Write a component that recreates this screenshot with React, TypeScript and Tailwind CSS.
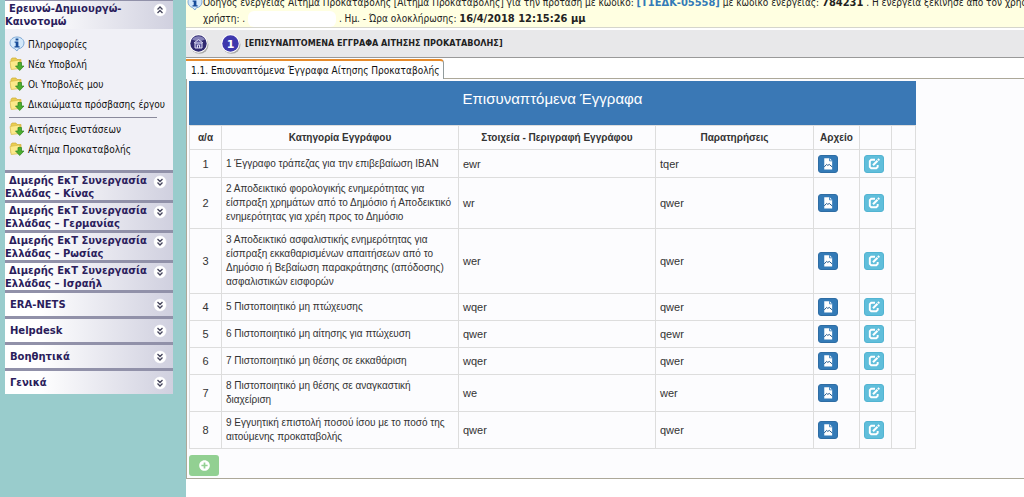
import type { ReactNode } from "react";
import { FaPlusCircle } from "react-icons/fa";

const tahoma = "font-['DejaVu_Sans_Condensed','DejaVu_Sans',sans-serif]";

function InfoIcon() {
  return (
    <svg viewBox="0 0 16 16" className="size-4 shrink-0" aria-hidden="true">
      <path d="M8 1C4 1 1 3.600 1 7c0 2.600 1.700 4.600 4.300 5.500L8 15l1.300-2.200C12.400 12.600 15 10.200 15 7c0-3.400-3-6-7-6z" fill="#d3e8fa" stroke="#7fa9d6" />
      <path d="M6.600 2.500h2.800v2H6.600zM5.600 5.500h3.800v4.800h1.200v1.300H5.500v-1.300h1.200V6.800H5.600z" fill="#174c99" />
    </svg>
  );
}

function FolderIcon() {
  return (
    <svg viewBox="0 0 16 16" className="size-4 shrink-0" aria-hidden="true">
      <path d="M2 3.500 3 2h4l1 1.500h4V12H2z" fill="#e9cd52" stroke="#cfae3b" strokeWidth=".7" />
      <path d="M1 5.500 10.500 4 11 12.500 2.200 13.500z" fill="#fbe98a" stroke="#d8bb4c" strokeWidth=".7" />
      <path d="M9 6.500h3.500V10H15l-4.300 4.500L6.500 10H9z" fill="#4cad2f" stroke="#2f8420" strokeWidth=".7" />
    </svg>
  );
}

function Chevrons({ up = false }: { up?: boolean }) {
  return (
    <svg viewBox="0 0 14 14" className="size-[14px] shrink-0" aria-hidden="true">
      <circle cx="7" cy="7" r="6.500" fill="#fff" stroke="#d3d3e2" strokeWidth=".6" />
      <path
        d={up ? "M4.500 6.500 7 4l2.500 2.500M4.500 10 7 7.500 9.500 10" : "M4.500 4 7 6.500 9.500 4M4.500 7.500 7 10l2.500-2.500"}
        fill="none"
        stroke="#45455c"
        strokeWidth="1.300"
      />
    </svg>
  );
}

function Heading({ children, open = false }: { children: ReactNode; open?: boolean }) {
  return (
    <button
      type="button"
      className="flex w-full items-start border-t-[3px] border-[#9191a9] bg-linear-to-r from-white from-20% to-[#d0d0df] pr-1.5 text-left font-['DejaVu_Sans',sans-serif] text-[10px]/[13px] font-bold text-[#2b1d5c]"
    >
      <span className="grow py-px indent-1 whitespace-nowrap">{children}</span>
      <span className="pt-0.5">
        <Chevrons up={open} />
      </span>
    </button>
  );
}

function SideLink({ children, icon }: { children: ReactNode; icon?: ReactNode }) {
  return (
    <li>
      <a href="#" className="flex h-5 items-center gap-[3px] whitespace-nowrap">
        {icon ?? <FolderIcon />}
        {children}
      </a>
    </li>
  );
}

const bilateral = ["Κίνας", "Γερμανίας", "Ρωσίας", "Ισραήλ"];
const sections = ["ERA-NETS", "Helpdesk", "Βοηθητικά", "Γενικά"];

const rows: [string, string, string][] = [
  ["1 Έγγραφο τράπεζας για την επιβεβαίωση IBAN", "ewr", "tqer"],
  ["2 Αποδεικτικό φορολογικής ενημερότητας για είσπραξη χρημάτων από το Δημόσιο ή Αποδεικτικό ενημερότητας για χρέη προς το Δημόσιο", "wr", "qwer"],
  ["3 Αποδεικτικό ασφαλιστικής ενημερότητας για είσπραξη εκκαθαρισμένων απαιτήσεων από το Δημόσιο ή Βεβαίωση παρακράτησης (απόδοσης) ασφαλιστικών εισφορών", "wer", "qwer"],
  ["5 Πιστοποιητικό μη πτώχευσης", "wqer", "qwer"],
  ["6 Πιστοποιητικό μη αίτησης για πτώχευση", "qwer", "qewr"],
  ["7 Πιστοποιητικό μη θέσης σε εκκαθάριση", "wqer", "qwer"],
  ["8 Πιστοποιητικό μη θέσης σε αναγκαστική διαχείριση", "we", "wer"],
  ["9 Εγγυητική επιστολή ποσού ίσου με το ποσό της αιτούμενης προκαταβολής", "qwer", "qwer"],
];

function Sidebar() {
  return (
    <nav className="w-[186px] shrink-0 bg-[#99cccc] pr-[13px] pl-[5px]">
      <div className="-mt-0.5">
        <Heading open>
          Ερευνώ-Δημιουργώ-
          <br />
          Καινοτομώ
        </Heading>
      </div>
      <ul className={`${tahoma} h-[141px] bg-[#f0f0f6] px-1 pt-[5px] text-[10px] text-[#111]`}>
        <SideLink icon={<InfoIcon />}>Πληροφορίες</SideLink>
        <SideLink>Νέα Υποβολή</SideLink>
        <SideLink>Οι Υποβολές μου</SideLink>
        <SideLink>Δικαιώματα πρόσβασης έργου</SideLink>
        <li className="mt-[3px] mr-3 mb-px border-t border-[#8a8a9c]" role="separator" />
        <SideLink>Αιτήσεις Ενστάσεων</SideLink>
        <SideLink>Αίτημα Προκαταβολής</SideLink>
      </ul>
      {bilateral.map((country) => (
        <div key={country} className="h-[30px] overflow-hidden">
          <Heading>
            Διμερής ΕκΤ Συνεργασία
            <br />
            Ελλάδας – {country}
          </Heading>
        </div>
      ))}
      {sections.map((name) => (
        <button
          key={name}
          type="button"
          className="flex h-[26px] w-full items-center justify-between border-t-[3px] border-[#9191a9] bg-linear-to-r from-white from-20% to-[#d0d0df] pr-1.5 pl-[5px] font-['DejaVu_Sans',sans-serif] text-[10px] font-bold text-[#2b1d5c]"
        >
          {name}
          <Chevrons />
        </button>
      ))}
    </nav>
  );
}

function Notice() {
  return (
    <div className={`${tahoma} flex h-7 items-end overflow-hidden border-b border-[#d5d5cc] bg-[#ffffe1] pl-px text-[10px]/[16px] whitespace-nowrap text-[#222]`}>
      <div className="flex">
        <InfoIcon />
        <p>
          Οδηγός ενέργειας Αίτημα Προκαταβολής [Αίτημα Προκαταβολής] για την πρόταση με κωδικό:{" "}
          <a href="#" className="text-[11px] font-bold text-[#337ab7]">[Τ1ΕΔΚ-05558]</a> με κωδικό ενέργειας: <b className="text-[11px]">784231</b> . Η ενέργεια ξεκίνησε από τον χρήστη
          <br />
          χρήστη: . <span className="inline-block h-4 w-[88px] rounded-md bg-white align-bottom" /> . Ημ. - Ώρα ολοκλήρωσης: <b className="text-[11px]">16/4/2018 12:15:26 μμ</b>
        </p>
      </div>
    </div>
  );
}

function FileIcon() {
  return (
    <svg viewBox="0 0 12 14" className="h-3 w-2.5" aria-hidden="true">
      <path d="M1.500 0h6.500l3 3v10.500h-9.500z" fill="#fff" />
      <path d="M7.800 0v3.200H11" fill="none" stroke="#337ab7" />
      <path d="M1.500 10.500 4.300 7.500l1.500 1.200L7.500 7.500l3.500 3" fill="none" stroke="#24598c" strokeWidth="1.200" />
    </svg>
  );
}

function EditIcon() {
  return (
    <svg viewBox="0 0 12 12" className="size-3" fill="none" stroke="currentColor" aria-hidden="true">
      <path d="M7 1.800H3.200L1.800 3.200v5.600l1.400 1.400h5.100l1.400-1.400V7" strokeWidth="1.900" />
      <path d="M5 7.200 9.500 2.700" strokeWidth="2.200" />
      <path d="M10 2.200 11.200 1" strokeWidth="2.200" />
    </svg>
  );
}

function DocumentsTable() {
  const cell = "border border-[#ddd] px-1";
  return (
    <table className="w-[726px] table-fixed border-collapse font-['Liberation_Sans',Arial,sans-serif] text-[11px]/[14px] text-[#333]">
      <caption className="h-11 bg-[#3a78b5] pt-2 text-[15px]/[20px] font-normal text-white">Επισυναπτόμενα Έγγραφα</caption>
      <colgroup>
        <col className="w-8" />
        <col className="w-[237px]" />
        <col className="w-[197px]" />
        <col className="w-[158px]" />
        <col className="w-[46px]" />
        <col className="w-8" />
        <col className="w-6" />
      </colgroup>
      <thead>
        <tr className="h-6 text-[10px]">
          {["α/α", "Κατηγορία Εγγράφου", "Στοιχεία - Περιγραφή Εγγράφου", "Παρατηρήσεις", "Αρχείο"].map((h) => (
            <th key={h} className={cell}>{h}</th>
          ))}
          <td className={cell} />
          <td className={cell} />
        </tr>
      </thead>
      <tbody>
        {rows.map(([category, details, notes], i) => (
          <tr key={category} className="first:h-7">
            <td className={`${cell} text-center`}>{i + 1}</td>
            <td className={`${cell} py-1 text-[10px]/[14px]`}>{category}</td>
            <td className={cell}>{details}</td>
            <td className={cell}>{notes}</td>
            <td className={`${cell} py-1`}>
              <button type="button" aria-label="Αρχείο" className="flex h-[18px] w-5 items-center justify-center rounded-[3px] border border-[#2e6da4] bg-[#337ab7]">
                <FileIcon />
              </button>
            </td>
            <td className={`${cell} py-1`}>
              <button type="button" aria-label="Επεξεργασία" className="flex h-[18px] w-5 items-center justify-center rounded-[3px] border border-[#52b4d2] bg-[#60bedb] text-white">
                <EditIcon />
              </button>
            </td>
            <td className={cell} />
          </tr>
        ))}
      </tbody>
    </table>
  );
}

function HomeBadge() {
  return (
    <svg viewBox="0 0 20 20" className="size-5" aria-hidden="true">
      <circle cx="10.500" cy="10.800" r="9" fill="#aaa" />
      <circle cx="9.500" cy="9.500" r="9.200" fill="#fff" />
      <circle cx="9.500" cy="9.500" r="8.200" fill="#302a70" />
      <path d="M3 5.500a8 8 0 0 1 13 0q-6.500 3-13 0" fill="#8582b8" />
      <path d="m5 9 4.500-3.500L14 9M6 9v5h7V9zM8.500 14v-3h2v3" fill="#5d589f" stroke="#dcdcf4" />
    </svg>
  );
}

function StepBadge() {
  return (
    <svg viewBox="0 0 20 20" className="size-5" aria-hidden="true">
      <circle cx="10.500" cy="10.800" r="9" fill="#aaa" />
      <circle cx="9.500" cy="9.500" r="9.200" fill="#fff" />
      <circle cx="9.500" cy="9.500" r="8.200" fill="#3e38ad" />
      <text x="9.500" y="13.500" textAnchor="middle" fill="#fff" fontSize="11" fontWeight="bold" fontFamily="DejaVu Sans">1</text>
    </svg>
  );
}

export default function App() {
  return (
    <div className="flex min-h-screen bg-white">
      <Sidebar />
      <main className="min-w-0 grow">
        <Notice />
        <div className="mt-0.5 flex h-7 items-center gap-3 border-b border-[#999] bg-[#e8e8ea] pl-[3px]">
          <a href="#" aria-label="Αρχική"><HomeBadge /></a>
          <div className="flex items-center gap-1">
            <StepBadge />
            <h1 className={`${tahoma} text-[9px] font-bold whitespace-nowrap text-[#222]`}>[ΕΠΙΣΥΝΑΠΤΟΜΕΝΑ ΕΓΓΡΑΦΑ ΑΙΤΗΣΗΣ ΠΡΟΚΑΤΑΒΟΛΗΣ]</h1>
          </div>
        </div>
        <div className="mt-px flex">
          <button type="button" className={`${tahoma} h-5 rounded-tr-sm border-t-2 border-r border-t-[#e68b2c] border-r-[#919b9c] pr-1 pl-[5px] text-[10px] whitespace-nowrap text-[#111]`}>
            1.1. Επισυναπτόμενα Έγγραφα Αίτησης Προκαταβολής
          </button>
          <div className="grow border-b border-[#aca899]" />
        </div>
        <section className="border-b border-l border-[#aca899] bg-[#fcfcfe] pt-0.5 pb-0.5 pl-0.5">
          <DocumentsTable />
          <button type="button" aria-label="Προσθήκη" className="mt-1.5 flex h-[21px] w-[30px] items-center justify-center rounded-[3px] bg-[#92d092] text-white">
            <FaPlusCircle className="size-[11px]" />
          </button>
        </section>
      </main>
    </div>
  );
}
